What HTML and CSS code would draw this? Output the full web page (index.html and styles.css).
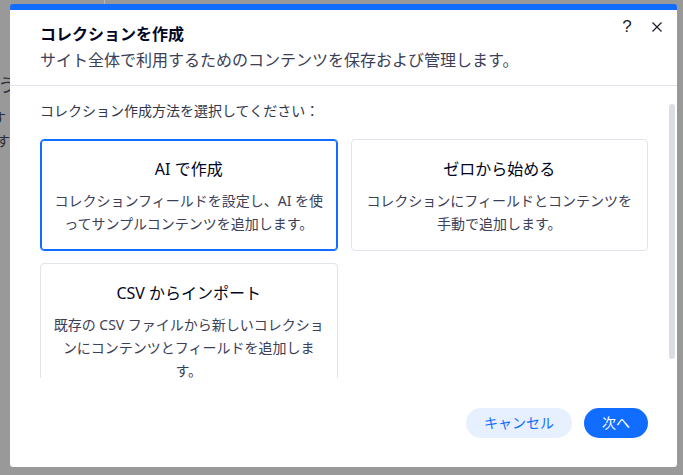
FILE: index.html
```html
<!DOCTYPE html>
<html lang="ja">
<head>
<meta charset="utf-8">
<title>コレクションを作成</title>
<link rel="stylesheet" href="styles.css">
</head>
<body>
<div class="page">
  <div class="page-top"></div>
  <p class="page-h">しょう</p>
  <p class="page-t">ます</p>
  <p class="page-t">します</p>
</div>

<div class="modal" role="dialog" aria-labelledby="mtitle">
  <header class="modal-header">
    <div class="header-text">
      <h1 id="mtitle" class="modal-title">コレクションを作成</h1>
      <p class="modal-subtitle">サイト全体で利用するためのコンテンツを保存および管理します。</p>
    </div>
    <div class="header-actions">
      <button class="icon-btn help" aria-label="ヘルプ">?</button>
      <button class="icon-btn" aria-label="閉じる">
        <svg width="12" height="12" viewBox="0 0 12 12"><path d="M1.5 1.5 L10.5 10.5 M10.5 1.5 L1.5 10.5" stroke="#1a1d2e" stroke-width="1.2" fill="none"/></svg>
      </button>
    </div>
  </header>

  <div class="modal-body">
    <p class="choose-label">コレクション作成方法を選択してください：</p>
    <div class="options">
      <div class="option selected">
        <div class="option-title">AI で作成</div>
        <div class="option-desc">コレクションフィールドを設定し、AI を使ってサンプルコンテンツを追加します。</div>
      </div>
      <div class="option">
        <div class="option-title">ゼロから始める</div>
        <div class="option-desc">コレクションにフィールドとコンテンツを手動で追加します。</div>
      </div>
      <div class="option">
        <div class="option-title">CSV からインポート</div>
        <div class="option-desc">既存の CSV ファイルから新しいコレクションにコンテンツとフィールドを追加します。</div>
      </div>
    </div>
    <div class="scroll-thumb"></div>
  </div>

  <footer class="modal-footer">
    <button class="btn btn-secondary">キャンセル</button>
    <button class="btn btn-primary">次へ</button>
  </footer>
</div>
</body>
</html>
```
FILE: styles.css
```css
* { box-sizing: border-box; }

html, body {
  margin: 0;
  height: 100%;
}

body {
  background: #989998;
  font-family: "Noto Sans", "Noto Sans CJK JP", sans-serif;
  overflow: hidden;
  position: relative;
}

.page {
  height: 100%;
  color: #2a2c3a;
}

.page-top {
  height: 4px;
  width: 105px;
  border-right: 1px solid #b4b4b4;
}

.page-h {
  margin: 70px 0 0 -38px;
  font-size: 18px;
  line-height: 22px;
}

.page-t {
  margin: 15px 0 0 -22px;
  font-size: 14px;
  line-height: 14px;
}
.page-t + .page-t { margin-top: 9px; margin-left: -32px; }

.modal {
  position: absolute;
  left: 10px;
  top: 4px;
  width: 667px;
  height: 463px;
  background: #ffffff;
  border-top: 6px solid #116dff;
  border-radius: 3px;
  display: flex;
  flex-direction: column;
  overflow: hidden;
}

.modal-header {
  display: flex;
  align-items: flex-start;
  padding: 5px 8px 13px 30px;
  border-bottom: 1px solid #dfe5eb;
  height: 76px;
  flex: none;
}

.header-text {
  flex: 1;
  padding-top: 7px;
}

.modal-title {
  margin: 0;
  font-size: 16px;
  line-height: 24px;
  font-weight: 700;
  color: #000624;
}

.modal-subtitle {
  margin: 2px 0 0;
  font-size: 16px;
  line-height: 24px;
  color: #3b4057;
}

.header-actions {
  display: flex;
  gap: 6px;
}

.icon-btn {
  width: 24px;
  height: 24px;
  padding: 0;
  border: none;
  background: transparent;
  display: flex;
  align-items: center;
  justify-content: center;
  color: #1a1d2e;
  cursor: pointer;
}

.icon-btn.help {
  font-family: "Liberation Sans", sans-serif;
  font-size: 17px;
  font-weight: 400;
  line-height: 24px;
  color: #1a1d2e;
}

.modal-body {
  flex: 1;
  position: relative;
  overflow: hidden;
  padding: 15px 29px 0 30px;
}

.choose-label {
  margin: 0 0 18px;
  font-size: 14px;
  line-height: 20px;
  color: #32364a;
}

.options {
  display: grid;
  grid-template-columns: 1fr 1fr;
  column-gap: 13px;
  row-gap: 12px;
}

.option {
  border: 1px solid #dfe5eb;
  border-radius: 4px;
  padding: 17px 11px 15px;
  text-align: center;
  background: #fff;
}

.option.selected {
  border-color: #116dff;
  box-shadow: inset 0 0 0 1px #116dff;
}

.option-title {
  font-size: 16px;
  line-height: 24px;
  color: #000624;
  margin-bottom: 8px;
}

.option-desc {
  font-size: 14px;
  line-height: 23px;
  color: #3b4057;
}

.scroll-thumb {
  position: absolute;
  right: 2px;
  top: 18px;
  width: 6px;
  height: 255px;
  border-radius: 3px;
  background: #dadde4;
}

.modal-footer {
  flex: none;
  display: flex;
  justify-content: flex-end;
  gap: 12px;
  padding: 30px 29px 29px 30px;
}

.btn {
  height: 30px;
  padding: 0 18px;
  border: none;
  border-radius: 15px;
  font-family: "Noto Sans", "Noto Sans CJK JP", sans-serif;
  font-size: 14px;
  line-height: 30px;
  cursor: pointer;
}

.btn-secondary {
  background: #e7f0ff;
  color: #116dff;
}

.btn-primary {
  background: #116dff;
  color: #ffffff;
}
```
